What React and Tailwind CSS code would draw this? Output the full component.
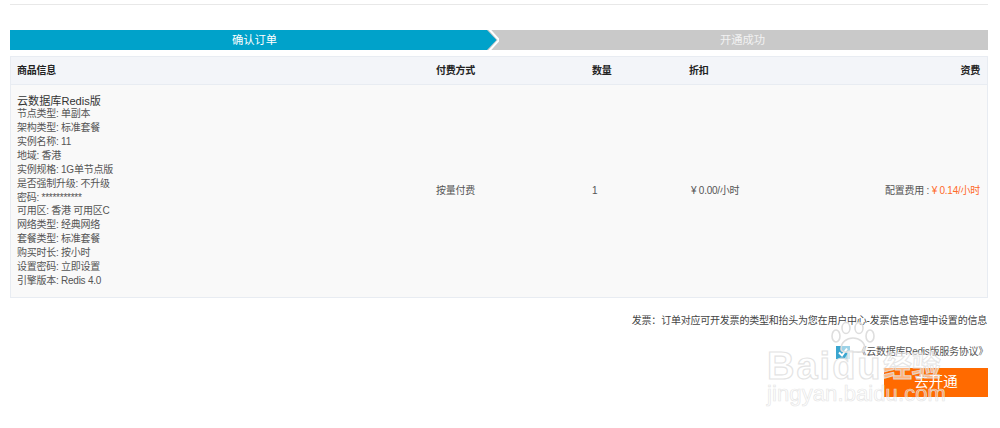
const details = [
  "节点类型: 单副本",
  "架构类型: 标准套餐",
  "实例名称: 11",
  "地域: 香港",
  "实例规格: 1G单节点版",
  "是否强制升级: 不升级",
  "密码: ***********",
  "可用区: 香港 可用区C",
  "网络类型: 经典网络",
  "套餐类型: 标准套餐",
  "购买时长: 按小时",
  "设置密码: 立即设置",
  "引擎版本: Redis 4.0",
];

function Watermark() {
  return (
    <div className="absolute left-[738px] top-[318px] w-[262px] h-[110px] pointer-events-none font-['Liberation_Sans','Noto_Sans_CJK_SC',sans-serif]">
      <svg className="absolute left-[90px] top-[4px]" width="50" height="32" viewBox="0 0 50 32" fill="rgba(255,255,255,0.5)" stroke="#dedede" strokeWidth="1.6">
        <ellipse cx="8" cy="14" rx="4" ry="6" />
        <ellipse cx="18" cy="6" rx="4" ry="5.5" />
        <ellipse cx="31" cy="6" rx="4" ry="5.5" />
        <ellipse cx="42" cy="14" rx="4" ry="6" />
        <path d="M13 27c0-7 6-11 12-11s12 4 12 11c0 4-6 3-12 3s-12 1-12-3z" />
      </svg>
      <div className="absolute left-[29px] top-[29px] text-[38px] leading-[38px] font-bold text-white/50 [-webkit-text-stroke:1.2px_rgba(222,222,222,0.85)] tracking-[2px]">Baidu</div>
      <div className="absolute left-[145px] top-[34px] text-[29px] leading-[30px] font-bold text-white/50 [-webkit-text-stroke:1px_rgba(225,225,225,0.85)]">经验</div>
      <div className="absolute left-[29px] top-[63px] text-[22px] leading-[26px] text-white/40 [-webkit-text-stroke:0.7px_rgba(225,225,225,0.85)] tracking-[0.1px]">jingyan.baidu.com</div>
    </div>
  );
}

export default function App() {
  return (
    <div className="relative w-[1000px] h-[428px] overflow-hidden bg-white text-[10px] tracking-[-0.25px] leading-[14px] text-[#555] font-['Liberation_Sans','Noto_Sans_CJK_SC',sans-serif]">
      <div className="mx-[10px] w-[978px] pt-[4px]">
        <div className="h-px bg-[#e8e8e8]" />

        <div className="mt-[25px] flex h-[20px] text-[11.3px] tracking-normal leading-[20px]">
          <div className="relative z-10 w-[477px] bg-[#00a2ca] text-center text-white">
            <span className="relative left-[6px]">确认订单</span>
            <svg className="absolute left-[477px] top-0" width="12" height="20" viewBox="0 0 12 20">
              <path d="M0 0 L9.5 10 L0 20 Z" fill="#00a2ca" />
              <path d="M0 -1 L10 10 L0 21" fill="none" stroke="#fff" strokeWidth="2" transform="translate(2 0)" />
            </svg>
          </div>
          <div className="flex-1 bg-[#c9c9c9] text-center text-[#f2f2f2]">
            <span className="relative left-[5px]">开通成功</span>
          </div>
        </div>

        <div className="mt-[6px] h-[242px] border border-[#e8ecf2] flex flex-col">
          <div className="flex h-[28px] shrink-0 items-center bg-[#f3f5f9] border-b border-[#e8ecf2] font-bold text-[#222]">
            <div className="w-[425px] pl-[6px]">商品信息</div>
            <div className="w-[156px]">付费方式</div>
            <div className="w-[97px]">数量</div>
            <div className="flex-1">折扣</div>
            <div className="pr-[7px]">资费</div>
          </div>
          <div className="flex flex-1 items-center bg-[#f9f9f9]">
            <div className="w-[425px] pl-[6px]">
              <div className="relative top-[1px] text-[11.1px] tracking-normal leading-[13px] text-[#333]">云数据库Redis版</div>
              {details.map((d) => (
                <div key={d} className="h-[13.9px]">{d}</div>
              ))}
            </div>
            <div className="w-[156px]">按量付费</div>
            <div className="w-[99px]">1</div>
            <div className="flex-1">¥ 0.00/小时</div>
            <div className="pr-[7px]">
              配置费用 : <span className="text-[#ff6a2a]">¥ 0.14/小时</span>
            </div>
          </div>
        </div>

        <div className="mt-[16px] text-right text-[#444] whitespace-nowrap pr-px tracking-[-0.22px]">
          发票：订单对应可开发票的类型和抬头为您在用户中心-发票信息管理中设置的信息
        </div>

        <div className="mt-[17px] flex items-center justify-end gap-[6px] h-[14px]">
          <svg width="14" height="13" viewBox="0 0 14 13">
            <rect width="14" height="13" fill="#3aa5cf" />
            <path d="M0 13 L14 13 L14 4 L8 13 Z" fill="#a8dcec" />
            <path d="M3 6.5 L6 9.5 L11 2.5" fill="none" stroke="#fff" strokeWidth="2" />
          </svg>
          <span>《云数据库Redis版服务协议》</span>
        </div>

        <div className="mt-[9px] flex justify-end">
          <button className="w-[104px] h-[29px] bg-[#ff6a00] text-white text-[14.5px] tracking-normal leading-[29px]">去开通</button>
        </div>
      </div>
      <Watermark />
    </div>
  );
}
